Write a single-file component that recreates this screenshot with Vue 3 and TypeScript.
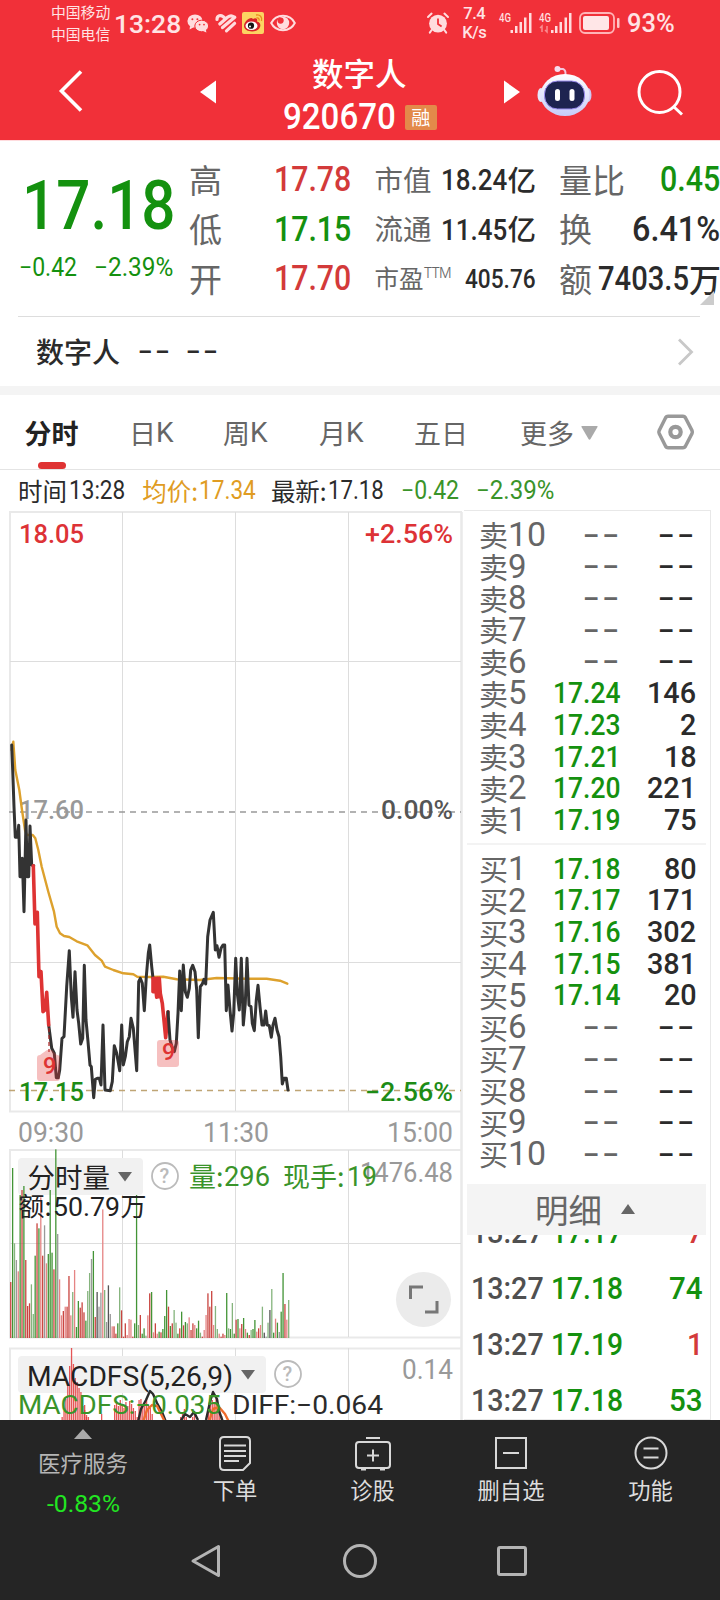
<script setup lang="ts">
interface BookRow { label: string; level: string; price: string; volume: string }
interface Bar { x: number; top: number; tone: string }

// Condenses a run of text horizontally so that it takes up the given width.
const vFit = {
  mounted(el: HTMLElement, binding: { value: number }) {
    const natural = el.offsetWidth
    el.style.transform = `scaleX(${binding.value / natural})`
    el.style.marginRight = `${binding.value - natural}px`
  },
}

const quote = [
  { a: '高', av: '17.78', tone: 'red', b: '市值', bv: '18.24', bu: '亿', c: '量比', cv: '0.45', cw: 60, cu: '', ct: 'green' },
  { a: '低', av: '17.15', tone: 'green', b: '流通', bv: '11.45', bu: '亿', c: '换', cv: '6.41%', cw: 88, cu: '', ct: '' },
  { a: '开', av: '17.70', tone: 'red', b: '市盈', bv: '405.76', bu: '', c: '额', cv: '7403.5', cw: 91, cu: '万', ct: '' },
]

const empty = (label: string, level: number): BookRow => ({ label, level: String(level), price: '', volume: '' })
const row = (label: string, level: number, price: string, volume: string): BookRow => ({ label, level: String(level), price, volume })
const sells: BookRow[] = [
  ...[10, 9, 8, 7, 6].map((n) => empty('卖', n)),
  row('卖', 5, '17.24', '146'), row('卖', 4, '17.23', '2'), row('卖', 3, '17.21', '18'),
  row('卖', 2, '17.20', '221'), row('卖', 1, '17.19', '75'),
]
const buys: BookRow[] = [
  row('买', 1, '17.18', '80'), row('买', 2, '17.17', '171'), row('买', 3, '17.16', '302'),
  row('买', 4, '17.15', '381'), row('买', 5, '17.14', '20'),
  ...[6, 7, 8, 9, 10].map((n) => empty('买', n)),
]
const trades = [
  { time: '13:27', price: '17.17', volume: '7', tone: 'red' },
  { time: '13:27', price: '17.18', volume: '74', tone: 'green' },
  { time: '13:27', price: '17.19', volume: '1', tone: 'red' },
  { time: '13:27', price: '17.18', volume: '53', tone: 'green' },
]

// Series are kept in thirds of a pixel relative to an origin.
function path(src: string, ox: number, oy: number): string {
  return src.split(' ').map((p) => {
    const [x, y] = p.split(',').map(Number)
    return `${(ox + x / 3).toFixed(1)},${(oy + y / 3).toFixed(1)}`
  }).join(' ')
}
const open = path('35,75 38,150 42,260 46,352 52,352 56,316 60,470 64,470 67,415 72,575 78,300 82,470 86,470 90,318 95,435 101,437', 0, 720)
const fall1 = path('100,437 105,612 112,577 117,770 123,755 129,875 135,870 140,817 146,915', 0, 720)
const mid = path('146,915 155,985 163,1000 169,1073 175,1073 179,1050 186,955 192,950 200,800 208,692 214,830 219,892 225,755 231,870 236,910 242,972 248,955 253,736 258,900 264,965 270,1035 274,1040 281,1133 286,1078 292,1075 298,1075 303,1095 309,915 315,1110 331,1112 337,1085 343,977 350,1000 359,1052 365,915 370,1035 376,1010 382,965 388,950 393,895 400,925 410,1052 416,785 421,775 427,790 433,872 439,770 445,700 449,675 455,740 459,775', 0, 720)
const fall2 = path('9,335 9,295 13,335 14,295 20,352 22,295 26,350 28,295 31,340 37,370 47,473 54,395', 150, 880)
const late = path('54,395 60,480 66,500 73,515 79,490 84,400 89,273 94,392 100,255 106,335 112,352 118,325 122,270 128,256 135,275 140,330 145,473 151,320 157,312 162,298 167,312 173,170 180,120 190,97 196,210 201,197 207,232 213,205 219,195 224,195 229,392 234,315 240,390 246,453 251,400 257,235 262,340 268,390 274,235 280,435 286,370 291,235 297,375 303,380 307,430 313,452 319,360 324,316 330,380 336,435 342,435 347,393 352,435 358,437 364,472 369,435 375,415 381,450 387,470 392,530 397,612 402,595 409,595 414,630', 150, 880)
const average = path('35,90 40,65 46,150 58,210 66,270 75,330 80,345 98,345 106,355 115,390 125,440 145,515 162,575 170,620 180,640 192,648 208,651 230,664 262,676 285,705 305,722 315,740 340,750 370,760 400,763 412,770 450,771 490,770 530,778 600,780 650,774 740,776 800,776 840,782 862,791', 0, 720)

const volumeSource = '516r 174g 400l 450k 484p 255g 240r 228g 450r 588r 580r 523l 612l 437g 340r 355g 262p 437r 346k 460p 432g 240g 428g 478r 118g 372k 508p 616p 603r 590p 590r 498r 616p 546l 480p 651g 573g 593r 577r 607r 632g 543l 489l 447k 423g 621r 546d 590k 548k 298p 540l 636k 526d 612k 649p 649r 671r 640g 532l 601r 680r 640r 675p 627p 629p 680r 640g 255g 645l 615r 671g 655g 677l 616p 550r 546g 667p 640r 671p 665g 667r 657g 618g 540g 590r 648g 640r 600l 638l 671g 655r 605g 646r 636g 640l 622p 660r 640r 645p 655g 632g 668l 680r 660p 615p 550r 590r 543r 645p 588l 657l 671p 680r 671r 675p 549g 655l 657g 579l 671g 629r 627g 655p 642r 624g 657p 668g 675r 660l 657g 630g 665p 655r 645p 590l 668d 680k 638l 600d 537l 668g 626p 638g 666k 605g 489g 582r 629p 570l'
const volumeBars: Bar[] = volumeSource.split(' ').map((s, i) => ({
  x: 10.1 + i * 1.878,
  top: 1110 + parseInt(s) / 3,
  tone: s.slice(-1),
}))

const macdGroups: [number, number[]][] = [
  [61.5, [1417, 1411, 1399, 1384, 1366, 1348, 1364, 1378, 1382, 1388, 1392, 1406, 1410, 1415]],
  [84, [1405, 1417, 1417]],
  [101, [1414]],
  [114, [1405, 1401, 1406, 1400, 1404, 1408, 1402, 1406, 1401, 1404, 1408, 1411, 1417, 1400, 1399, 1406, 1402, 1399, 1405, 1408, 1414]],
  [180, [1417, 1412, 1409, 1417]],
  [192, [1417, 1414]],
  [206, [1416, 1408, 1404, 1400, 1403, 1398, 1405, 1410, 1416]],
]
const macdBars = macdGroups.flatMap(([x, tops]) => tops.map((top, i) => ({ x: x + i * 1.878, top })))
</script>

<template>
  <div class="screen">
    <header class="top">
      <div class="status">
        <div class="carriers"><span>中国移动</span><span>中国电信</span></div>
        <span v-fit="67" class="n clock">13:28</span>
        <svg class="i-wechat" width="22" height="19" viewBox="0 0 22 19">
          <ellipse cx="8" cy="7" rx="7.6" ry="6.6" fill="#ffdcde" /><path d="M3 12 2.6 15.6 7 13z" fill="#ffdcde" />
          <ellipse cx="14.7" cy="12" rx="6.9" ry="5.8" fill="#ffdcde" stroke="#f13039" /><path d="M16 17l3.4 1.6-.6-3z" fill="#ffdcde" />
          <g fill="#f13039"><circle cx="5.4" cy="5.2" r="1" /><circle cx="10.4" cy="5.2" r="1" /><circle cx="12.6" cy="10.6" r=".9" /><circle cx="17" cy="10.6" r=".9" /></g>
        </svg>
        <svg class="i-stripe" width="22" height="19" viewBox="0 0 22 19" fill="none" stroke="#ffdcde" stroke-width="3.2" stroke-linecap="round">
          <path d="M2 5.500C2 1 6 1 8 2.500L10 4.200M4.800 10 12.500 3.300Q16 .6 19 3M7.500 13.600 19.800 3.300M11.500 16.800 19.600 9.300" />
        </svg>
        <svg class="i-weibo" width="22" height="22" viewBox="0 0 22 22">
          <rect width="22" height="22" rx="2" fill="#fcd462" />
          <path d="M2 14C2 9 9 4 11 7c3-1.6 5 0 4 2.4 3 .8 4 3 3 5.600C17 21 2 21 2 14z" fill="#d8232a" />
          <ellipse cx="9.500" cy="13.700" rx="6" ry="4.300" fill="#fff" /><circle cx="9" cy="13.700" r="3.100" fill="#151515" /><circle cx="8" cy="14.500" r="1" fill="#fff" />
          <path d="M14 3c4-.8 6.500 2 5.500 6M14.500 6c2-.4 3 .8 2.500 2.600" fill="none" stroke="#eb8a1e" stroke-width="1.300" />
        </svg>
        <svg class="i-eye" width="26" height="18" viewBox="0 0 26 18">
          <path d="M1.200 9C6-.6 20-.6 24.800 9 20 18.600 6 18.600 1.200 9z" fill="none" stroke="#ffdcde" stroke-width="2" />
          <circle cx="13" cy="9" r="6.200" fill="#ffdcde" /><circle cx="10.600" cy="6.600" r="3.100" fill="#f13039" />
        </svg>
        <svg class="i-alarm" width="22" height="22" viewBox="0 0 22 22">
          <circle cx="11" cy="11.600" r="8.900" fill="#ffdcde" />
          <path d="M11 6.500v5.500l3.600 2.500" fill="none" stroke="#f13039" stroke-width="1.800" />
          <path d="M1 5 4.600 1.600M21 5 17.400 1.600M4.600 18 2.800 20.600M17.400 18l1.800 2.600" stroke="#ffdcde" stroke-width="2" stroke-linecap="round" />
        </svg>
        <div class="speed n"><span>7.4</span><span>K/s</span></div>
        <svg class="i-signal" width="74" height="22" viewBox="0 0 74 22">
          <g fill="#ffdcde">
            <text x="0" y="9.500" class="n" font-size="12" textLength="12" lengthAdjust="spacingAndGlyphs">4G</text>
            <text x="40" y="9.500" class="n" font-size="12" textLength="12" lengthAdjust="spacingAndGlyphs">4G</text>
            <rect x="11.500" y="18" width="2.500" height="3" /><rect x="16" y="14" width="2.500" height="7" /><rect x="20.500" y="10" width="2.500" height="11" /><rect x="25" y="5.500" width="2.500" height="15.500" /><rect x="30" y="1" width="2.500" height="20" />
            <rect x="52" y="18" width="2.500" height="3" /><rect x="56" y="14" width="2.500" height="7" /><rect x="60.500" y="10" width="2.500" height="11" /><rect x="65.500" y="5.500" width="2.500" height="15.500" /><rect x="70" y="1" width="2.500" height="20" />
          </g>
          <path d="M41 16l2-2v6M48 14v6l-2-2" fill="none" stroke="#fa8c90" stroke-width="1.500" />
        </svg>
        <svg class="i-battery" width="42" height="22" viewBox="0 0 42 22">
          <rect x="1" y="1" width="34" height="20" rx="5" fill="none" stroke="#ffb4b7" stroke-width="1.800" />
          <rect x="4" y="4" width="26" height="14" rx="2" fill="#ffe6e7" /><rect x="38" y="6" width="2.500" height="10" rx="1" fill="#ffc4c6" />
        </svg>
        <span v-fit="48" class="n percent">93%</span>
      </div>
      <div class="titlebar">
        <svg class="back" width="26" height="46" viewBox="0 0 26 46"><path d="M23 3.500 3.500 23 23 42.500" fill="none" stroke="#fff" stroke-width="3.600" /></svg>
        <svg class="prev" width="16" height="24" viewBox="0 0 16 24"><path d="M0 12 16 .5v23z" fill="#fff" /></svg>
        <div class="title">
          <div class="name">数字人</div>
          <div class="code"><span v-fit="113" class="n">920670</span><span class="badge">融</span></div>
        </div>
        <svg class="next" width="16" height="24" viewBox="0 0 16 24"><path d="M16 12 0 .5v23z" fill="#fff" /></svg>
        <svg class="robot" width="56" height="54" viewBox="0 0 56 54">
          <defs><linearGradient id="shell" x1="0" y1="0" x2="0" y2="1"><stop offset="0" stop-color="#fff" /><stop offset="1" stop-color="#c6ccf8" /></linearGradient></defs>
          <path d="M21 5h5q3 1 2.500 6" fill="none" stroke="#f3c6dc" stroke-width="2" /><circle cx="20.500" cy="5" r="3" fill="#f6dcee" />
          <ellipse cx="4" cy="31" rx="3.500" ry="7" fill="#e4e6fc" /><ellipse cx="51" cy="31" rx="3.500" ry="7" fill="#cfc9f4" />
          <ellipse cx="28" cy="31" rx="24.500" ry="21" fill="url(#shell)" /><rect x="7.500" y="17" width="40" height="28" rx="13" fill="#1d2450" stroke="#9b8df0" stroke-width="1" />
          <rect x="18" y="25" width="5" height="12" rx="2.500" fill="#fff" /><rect x="32.500" y="25" width="5" height="12" rx="2.500" fill="#fff" />
        </svg>
        <svg class="search" width="46" height="46" viewBox="0 0 46 46" fill="none" stroke="#fff" stroke-width="3"><circle cx="22.500" cy="22" r="20.500" /><path d="M36.500 36.500 45 44.500" /></svg>
      </div>
    </header>

    <section class="quote">
      <div class="last">
        <div class="price"><span v-fit="154" class="n green">17.18</span></div>
        <div class="change green"><span v-fit="58" class="n">−0.42</span><span v-fit="79" class="n">−2.39%</span></div>
      </div>
      <div class="stats">
        <div v-for="(q, i) in quote" :key="q.a" class="stat">
          <span class="big">{{ q.a }}</span>
          <span class="right"><span v-fit="77" class="n v1" :class="q.tone">{{ q.av }}</span></span>
          <span class="cap" :class="{ small: i === 2 }">{{ q.b }}<sup v-if="i === 2">TTM</sup></span>
          <span class="right"><span v-fit="i === 2 ? 71 : 66" class="n v2" :class="{ small: i === 2 }">{{ q.bv }}</span><span v-if="q.bu" class="unit">{{ q.bu }}</span></span>
          <span class="big fourth">{{ q.c }}</span>
          <span class="right"><span v-fit="q.cw" class="n v1" :class="[q.ct, { wan: i === 2 }]">{{ q.cv }}</span><span v-if="q.cu" class="unit wide">{{ q.cu }}</span></span>
        </div>
      </div>
      <svg class="corner" width="14" height="14" viewBox="0 0 14 14"><path d="M14 0v14H0z" fill="#ccc" /></svg>
    </section>

    <section class="related">
      <span class="rel-name">数字人</span><span v-fit="35" class="n dash">--</span><span v-fit="35" class="n dash">--</span>
      <svg width="18" height="30" viewBox="0 0 18 30"><path d="M2 2.500 14.500 15 2 27.500" fill="none" stroke="#c8c8c8" stroke-width="2.800" /></svg>
    </section>

    <nav class="tabs">
      <span class="tab active">分时</span>
      <span class="tab">日<i>K</i></span><span class="tab">周<i>K</i></span><span class="tab">月<i>K</i></span><span class="tab">五日</span>
      <span class="tab">更多<svg width="17" height="14" viewBox="0 0 17 14"><path d="M1 0h15q1 0 .5 1L9.500 13q-1 1.500-2 0L.5 1Q0 0 1 0z" fill="#aaa" /></svg></span>
      <svg class="gear" width="37" height="36" viewBox="0 0 37 36" fill="none" stroke="#999" stroke-width="3.500"><path d="M11 2.200h15q1.500 0 2.300 1.300L35 16.500q.6 1.500 0 3L28.300 32.500q-.8 1.300-2.300 1.300H11q-1.500 0-2.300-1.300L2.200 19.500q-.7-1.500 0-3L8.700 3.500Q9.500 2.200 11 2.200z" /><circle cx="18.500" cy="18" r="5.200" stroke-width="4.200" /></svg>
    </nav>

    <div class="info">
      <span>时间</span><span v-fit="56" class="n">13:28</span>
      <span class="gold avg">均价:</span><span v-fit="57" class="n gold">17.34</span>
      <span class="new">最新:</span><span v-fit="56" class="n">17.18</span>
      <span v-fit="58" class="n leaf d1">−0.42</span><span v-fit="78" class="n leaf d2">−2.39%</span>
    </div>

    <main class="body">
      <div class="charts">
        <svg class="chart" width="464" height="640" viewBox="0 509 464 640">
          <g fill="none" stroke="#e9e9e9" stroke-width="2">
            <path d="M9 512H462M9 1111.500H462M10 512V1112" /><path d="M461.500 512V1420" stroke-width="2.500" />
            <path d="M122.500 512V1111M235.500 512V1111M348.500 512V1111M10 661.500H461M10 962.500H461" stroke="#ddd" stroke-width="1" />
          </g>
          <path d="M9 812H461" stroke="#999" stroke-width="1.600" stroke-dasharray="6 5" />
          <path d="M9 1090.500H461" stroke="#bfa575" stroke-width="1.600" stroke-dasharray="6 5" />
          <g class="n mark">
            <text x="19" y="543" textLength="65" lengthAdjust="spacingAndGlyphs" fill="#dd3236">18.05</text>
            <text x="365" y="543" textLength="88" lengthAdjust="spacingAndGlyphs" fill="#dd3236">+2.56%</text>
            <text x="19" y="818.500" textLength="65" lengthAdjust="spacingAndGlyphs" fill="#999">17.60</text>
            <text x="381" y="818.500" textLength="72" lengthAdjust="spacingAndGlyphs" fill="#555">0.00%</text>
          </g>
          <g fill="none" stroke-width="3" stroke-linejoin="round" stroke-linecap="round">
            <polyline :points="average" stroke="#dda12d" stroke-width="2.400" />
            <polyline :points="open" stroke="#333" /><polyline :points="mid" stroke="#333" />
            <polyline :points="fall1" stroke="#de3333" stroke-width="3.600" /><polyline :points="fall2" stroke="#de3333" stroke-width="3.600" />
            <polyline :points="late" stroke="#333" />
          </g>
          <path d="M49 1028V1052" stroke="#a22" stroke-width="1.200" stroke-dasharray="4 3" />
          <path d="M40 1055l7-5h5l5 5q3 0 3 3v20q0 3-3 3H40q-3 0-3-3v-20q0-3 3-3z" fill="#e33b3b" fill-opacity=".32" />
          <rect x="157" y="1040" width="22" height="27" rx="3" fill="#e33b3b" fill-opacity=".32" />
          <g class="n" fill="#de3333" font-size="23"><text x="43" y="1074">9</text><text x="162" y="1060">9</text></g>
          <g class="n mark" fill="#1d8c16">
            <text x="19" y="1100.500" textLength="65" lengthAdjust="spacingAndGlyphs">17.15</text>
            <text x="365" y="1100.500" textLength="88" lengthAdjust="spacingAndGlyphs">−2.56%</text>
          </g>
          <g class="n mark axis" fill="#999">
            <text x="18" y="1142" textLength="66" lengthAdjust="spacingAndGlyphs">09:30</text>
            <text x="203" y="1142" textLength="66" lengthAdjust="spacingAndGlyphs">11:30</text>
            <text x="387" y="1142" textLength="66" lengthAdjust="spacingAndGlyphs">15:00</text>
          </g>
        </svg>

        <svg class="chart" width="464" height="198" viewBox="0 1149 464 198">
          <g fill="none" stroke="#e9e9e9" stroke-width="2">
            <path d="M9 1150H462M9 1337.500H462M10 1150V1338" /><path d="M461.500 1149V1347" stroke-width="2.500" />
            <path d="M122.500 1150V1337M235.500 1150V1337M348.500 1150V1337M10 1243.500H461" stroke="#ddd" stroke-width="1" />
          </g>
          <rect x="18" y="1158" width="125" height="37" rx="4" fill="#f1f1f1" />
          <rect v-for="(b, i) in volumeBars" :key="i" :x="b.x" :y="b.top" width="1.300" :height="1338 - b.top" :class="'bar-' + b.tone" />
          <text x="27.500" y="1188" class="cjk" font-size="27.500" fill="#222">分时量</text><path d="M118 1172h14l-7 9.500z" fill="#666" />
          <circle cx="165" cy="1176" r="13" fill="none" stroke="#bbb" stroke-width="1.800" /><text x="159.500" y="1183" class="n" font-size="20" fill="#bbb">?</text>
          <text x="360" y="1182" class="n mark axis" textLength="93" lengthAdjust="spacingAndGlyphs" fill="#999">1476.48</text>
          <g fill="#3a942a" font-size="27">
            <text x="189" y="1187" class="cjk">量:</text><text x="224" y="1186" class="n light" textLength="46" lengthAdjust="spacingAndGlyphs">296</text>
            <text x="283" y="1187" class="cjk">现手:</text><text x="347" y="1186" class="n light" textLength="30" lengthAdjust="spacingAndGlyphs">19</text>
          </g>
          <g fill="#222" font-size="26">
            <text x="18.500" y="1216" class="cjk">额:</text><text x="53" y="1216" class="n light" textLength="67" lengthAdjust="spacingAndGlyphs">50.79</text><text x="120.500" y="1216" class="cjk">万</text>
          </g>
          <circle cx="423.500" cy="1299.500" r="27.500" fill="#ebebeb" />
          <path d="M410.500 1299V1287H423M425 1312H437V1301" fill="none" stroke="#777" stroke-width="3" />
        </svg>

        <svg class="chart" width="464" height="73" viewBox="0 1347 464 73">
          <g fill="none" stroke="#e9e9e9" stroke-width="2">
            <path d="M9 1348.500H462M10 1348V1420" /><path d="M461.500 1347V1420" stroke-width="2.500" />
            <path d="M122.500 1348V1420M235.500 1348V1420M348.500 1348V1420" stroke="#ddd" stroke-width="1" />
          </g>
          <rect x="18" y="1356" width="248" height="37" rx="4" fill="#f1f1f1" />
          <rect v-for="(b, i) in macdBars" :key="i" :x="b.x" :y="b.top" width="1.300" :height="1420 - b.top" fill="#e0383a" fill-opacity=".85" />
          <g fill="none" stroke-width="2.400" stroke-linejoin="round">
            <path d="M138 1422L141 1409L146 1400L150 1391L153 1394L157 1403L162 1412L166 1422M180 1422L185 1414L190 1417L194 1412L198 1420M206 1420L210 1402L213 1392L217 1399L219 1411L223 1422" stroke="#2c2c2c" />
            <path d="M143 1422L147 1410L152 1405L157 1406L161 1414L165 1422M209 1422L213 1409L219 1407L225 1414L229 1422" stroke="#ef6c2d" />
          </g>
          <text x="27" y="1386" class="inter" font-size="27" textLength="206" lengthAdjust="spacingAndGlyphs" fill="#222">MACDFS(5,26,9)</text><path d="M241 1370h14l-7 9.500z" fill="#666" />
          <circle cx="288" cy="1374" r="13" fill="none" stroke="#bbb" stroke-width="1.800" /><text x="282.500" y="1381" class="n" font-size="20" fill="#bbb">?</text>
          <text x="402" y="1379" class="n mark axis" textLength="51" lengthAdjust="spacingAndGlyphs" fill="#999">0.14</text>
          <text x="18" y="1413.500" class="inter" font-size="26" textLength="203" lengthAdjust="spacingAndGlyphs" fill="#3a942a">MACDFS:−0.035</text>
          <text x="232" y="1413.500" class="inter" font-size="26" textLength="151" lengthAdjust="spacingAndGlyphs" fill="#2b2b2b">DIFF:−0.064</text>
        </svg>
      </div>

      <aside class="book">
        <div v-for="(side, s) in [sells, buys]" :key="s" class="side" :class="{ buy: s === 1 }">
          <div v-for="r in side" :key="r.level" class="level">
            <span class="lv">{{ r.label }}<span v-fit="r.level.length * 19" class="n">{{ r.level }}</span></span>
            <span v-if="r.price" v-fit="68" class="n lp">{{ r.price }}</span>
            <span v-else v-fit="39" class="n dash grey">--</span>
            <span v-if="r.price" v-fit="r.volume.length * 16.3" class="n lq">{{ r.volume }}</span>
            <span v-else v-fit="39" class="n dash">--</span>
          </div>
        </div>
        <div class="detail">明细<svg width="14" height="10" viewBox="0 0 14 10"><path d="M7 0l7 10H0z" fill="#666" /></svg></div>
        <div class="trades">
          <div v-for="(t, i) in trades" :key="i" class="trade">
            <span v-fit="73" class="n">{{ t.time }}</span><span v-fit="72" class="n green">{{ t.price }}</span>
            <span v-fit="t.volume.length * 16.7" class="n tq" :class="t.tone">{{ t.volume }}</span>
          </div>
        </div>
      </aside>
    </main>

    <footer class="bottom">
      <div class="actions">
        <div class="sector">
          <svg width="18" height="10" viewBox="0 0 18 10"><path d="M9 0l9 10H0z" fill="#aaa" /></svg>
          <span class="sector-name">医疗服务</span><span v-fit="73" class="n loss">-0.83%</span>
        </div>
        <div class="action">
          <svg width="40" height="38" viewBox="0 0 40 38"><path d="M9 3h22q4 0 4 4v22l-7 7H9q-4 0-4-4V7q0-4 4-4zM9 11.500h22M9 17h22M9 22h22M9 27h15" /></svg><span>下单</span>
        </div>
        <div class="action">
          <svg width="40" height="38" viewBox="0 0 40 38"><path d="M13 4h14M6 8h28q3 0 3 3v20q0 3-3 3H6q-3 0-3-3V11q0-3 3-3zM20 15.500v12M14 21.500h12M8 35.500h5M27 35.500h5" /></svg><span>诊股</span>
        </div>
        <div class="action">
          <svg width="40" height="38" viewBox="0 0 40 38"><path d="M5 4h30v30H5zM12 19h16" /></svg><span>删自选</span>
        </div>
        <div class="action">
          <svg width="40" height="38" viewBox="0 0 40 38"><circle cx="20" cy="19" r="15.500" /><path d="M12.500 14.500h15M12.500 23.500h15" /></svg><span>功能</span>
        </div>
      </div>
      <div class="system">
        <svg width="34" height="36" viewBox="0 0 34 36"><path d="M4 18 29.500 3.500v29z" /></svg>
        <svg width="36" height="36" viewBox="0 0 36 36"><circle cx="18" cy="18" r="15.500" /></svg>
        <svg width="34" height="36" viewBox="0 0 34 36"><rect x="1.500" y="4.500" width="27" height="27" rx="1.500" /></svg>
      </div>
    </footer>
  </div>
</template>

<style>
body { margin: 0; background: #fff; }
</style>

<style scoped>
.screen { width: 720px; height: 1600px; overflow: hidden; display: flex; flex-direction: column; font-family: "Noto Sans CJK SC", sans-serif; color: #2b2b2b; background: #fff; line-height: 1; }
.n { font-family: Roboto, "Noto Sans CJK SC", sans-serif; font-weight: 500; display: inline-block; transform-origin: left center; white-space: nowrap; line-height: 1.17; }
.cjk { font-family: "Noto Sans CJK SC", sans-serif; }
.inter { font-family: Roboto, sans-serif; font-weight: 400; }
.light { font-weight: 400; }
svg { display: block; flex: none; overflow: visible; }
.chart { overflow: hidden; }
.red { color: #d33a3a; } .green { color: #14910f; } .gold { color: #e09c22; } .leaf { color: #3a942a; }

.top { height: 140px; background: #f13039; color: #fff; flex: none; border-bottom: 1px solid #ffdcde; }
.status { height: 46px; display: flex; align-items: center; color: #ffe3e4; padding-left: 51px; }
.carriers { display: flex; flex-direction: column; font-size: 14.8px; line-height: 22px; width: 63px; }
.clock { font-size: 26.5px; font-weight: 500; }
.i-wechat { margin-left: 6px; } .i-stripe { margin-left: 6px; } .i-weibo { margin-left: 5px; } .i-eye { margin-left: 6px; }
.i-alarm { margin-left: 131px; }
.speed { display: flex; flex-direction: column; font-size: 16.5px; line-height: 19px; width: 26px; text-align: center; margin-left: 12px; font-weight: 500; letter-spacing: -.4px; }
.i-signal { margin-left: 12px; } .i-battery { margin-left: 6px; }
.percent { font-size: 26px; margin-left: 6px; font-weight: 500; }
.titlebar { display: flex; height: 94px; }
.back { margin: 22px 0 0 58px; } .prev { margin: 34px 0 0 116px; }
.title { width: 160px; margin-left: 62px; display: flex; flex-direction: column; padding-left: 5px; }
.name { font-size: 31.5px; font-weight: 500; line-height: 32px; margin: 10px 0 0 29px; }
.code { display: flex; align-items: center; font-size: 36px; height: 34px; margin-top: 12px; }
.code .n { line-height: 34px; }
.badge { width: 32px; height: 25px; line-height: 24px; margin-left: 9px; border-radius: 2px; background: #e38a4a; font-size: 19px; text-align: center; }
.next { margin: 34px 0 0 61px; } .robot { margin: 18px 0 0 17px; } .search { margin: 24px 0 0 44px; }

.quote { position: relative; height: 175px; display: flex; border-bottom: 1px solid #ddd; margin-left: 18px; width: 702px; border-image: linear-gradient(90deg, #ddd 681px, #fff 681px) 1; flex: none; }
.last { width: 170px; }
.price { height: 78px; margin-top: 25px; font-size: 68px; margin-left: 4px; }
.price .n { line-height: 80px; }
.change { display: flex; justify-content: space-between; font-size: 25px; width: 154px; height: 30px; margin: 9px 0 0 1px; line-height: 30px; }
.change .n { font-weight: 400; }
.stats { flex: 1; padding-top: 12.500px; }
.stat { height: 49.500px; display: grid; grid-template-columns: 84px 79px 90px 95px 66px 118px; align-items: center; }
.right { display: flex; justify-content: flex-end; align-items: center; }
.big { font-size: 33px; color: #666; line-height: 50px; height: 54px; padding-left: 1px; }
.fourth { margin-left: 22px; white-space: nowrap; }
.cap { font-size: 28.500px; color: #666; padding-left: 23.500px; line-height: 50px; height: 54px; white-space: nowrap; }
.cap.small { font-size: 24.500px; }
.cap sup { font: 300 14px/1 Inter, sans-serif; vertical-align: 10px; letter-spacing: -1.200px; }
.v1 { font-size: 35px; } .v2 { font-size: 29.500px; } .v2.small { font-size: 25.500px; } .v1.wan { font-size: 33px; }
.unit { font-size: 28.500px; font-weight: 500; line-height: 46px; height: 50px; } .unit.wide { font-size: 32px; margin-right: -1px; }
.corner { position: absolute; right: 6px; bottom: 11px; }

.related { height: 69px; display: flex; align-items: center; padding-left: 36px; flex: none; }
.rel-name { font-size: 28px; font-weight: 500; margin-right: 18px; height: 29px; }
.dash { font-size: 30px; letter-spacing: .06em; }
.related .dash { font-size: 27px; }
.related .dash + .dash { margin-left: 13px; }
.related svg { margin-left: auto; margin-right: 25px; }

.tabs { height: 74px; border-top: 9px solid #f4f4f4; border-bottom: 1px solid #e4e4e4; display: grid; grid-template-columns: 104.500px 94px 96px 95px 106px 137px 1fr; padding-left: 24.500px; align-items: center; flex: none; }
.tab { font-size: 27px; color: #666; position: relative; display: flex; align-items: center; height: 72px; line-height: 72px; padding-top: 2px; }
.tab i { font: 400 28px/72px Roboto, sans-serif; }
.tab svg { margin-left: 7px; }
.tab.active { color: #222; font-weight: 700; }
.tab.active::after { content: ""; position: absolute; left: 13.500px; bottom: 0; width: 28px; height: 7px; border-radius: 3.500px; background: #df3333; }

.info { height: 37px; padding-top: 2px; display: flex; align-items: center; padding-left: 18px; font-size: 24.500px; line-height: 36px; flex: none; }
.info .n { font-size: 25px; font-weight: 400; margin-left: 2px; }
.info span.avg { margin-left: 17px; } .info span.new { margin-left: 15px; }
.info .avg + .n, .info .new + .n { margin-left: 1px; }
.info .n.d1 { margin-left: 18px; } .info .n.d2 { margin-left: 16px; }

.body { display: flex; height: 911px; flex: none; overflow: hidden; }
.charts { width: 464px; flex: none; }
.mark { font-size: 25.500px; font-weight: 500; } .mark.axis { font-size: 27px; font-weight: 400; }
.bar-r { fill: #c9443f; } .bar-p { fill: #e58484; } .bar-g { fill: #439436; } .bar-l { fill: #85b47d; } .bar-k { fill: #999; } .bar-d { fill: #555; }

.book { width: 246px; border: 1px solid #e8e8e8; border-left: 0; margin-top: 1px; }
.side { padding: 7.500px 0 7px; margin: 0 4px 0 3px; border-bottom: 2px solid #f3f3f3; height: 317px; }
.side.buy { padding-top: 8px; border: 0; height: 318px; padding-bottom: 13px; }
.level { height: 31.680px; display: flex; align-items: center; padding-right: 9.500px; }
.lv { font-size: 29px; color: #666; width: 85.500px; padding-left: 12px; display: flex; align-items: center; line-height: 30px; height: 34px; flex: none; box-sizing: border-box; }
.lv .n { font-size: 33px; font-weight: 400; margin-top: 2px; }
.lp { color: #14910f; font-size: 30px; }
.lq { font-size: 30px; } .lq, .level .dash:last-child { margin-left: auto; }
.grey { color: #666; position: relative; left: 30.500px; }
.detail { height: 51px; background: #f4f4f4; margin: 0 4px 0 3px; color: #666; font-size: 33.500px; display: flex; align-items: center; padding-left: 68px; line-height: 46px; box-sizing: border-box; }
.detail svg { margin-left: 19px; }
.trades { overflow: hidden; height: 185px; display: flex; flex-direction: column; justify-content: flex-end; }
.trade { height: 56px; flex: none; display: flex; align-items: center; padding: 0 7px 0 7px; font-size: 31px; color: #505050; gap: 7px; position: relative; top: 10px; }
.tq { margin-left: auto; }

.bottom { background: #252525; height: 180px; flex: none; }
.actions { height: 104px; display: grid; grid-template-columns: 166px 138px 137px 140px 139px; color: #ddd; }
.sector { display: flex; flex-direction: column; align-items: center; padding-top: 9px; }
.sector-name { font-size: 22.500px; color: #b5b5b5; margin-top: 10px; line-height: 26px; }
.loss { font-size: 24px; font-weight: 400; color: #22e622; line-height: 28px; margin-top: 15px; align-self: flex-start; margin-left: 47px; }
.action { display: flex; flex-direction: column; align-items: center; font-size: 22.300px; line-height: 26px; padding-top: 14px; }
.action svg { fill: none; stroke: #d8d8d8; stroke-width: 2; margin-bottom: 4px; }
.system { display: flex; padding: 19px 0 0 189px; gap: 119px; }
.system svg { fill: none; stroke: #b4b4b4; stroke-width: 3; stroke-linejoin: round; }
</style>
